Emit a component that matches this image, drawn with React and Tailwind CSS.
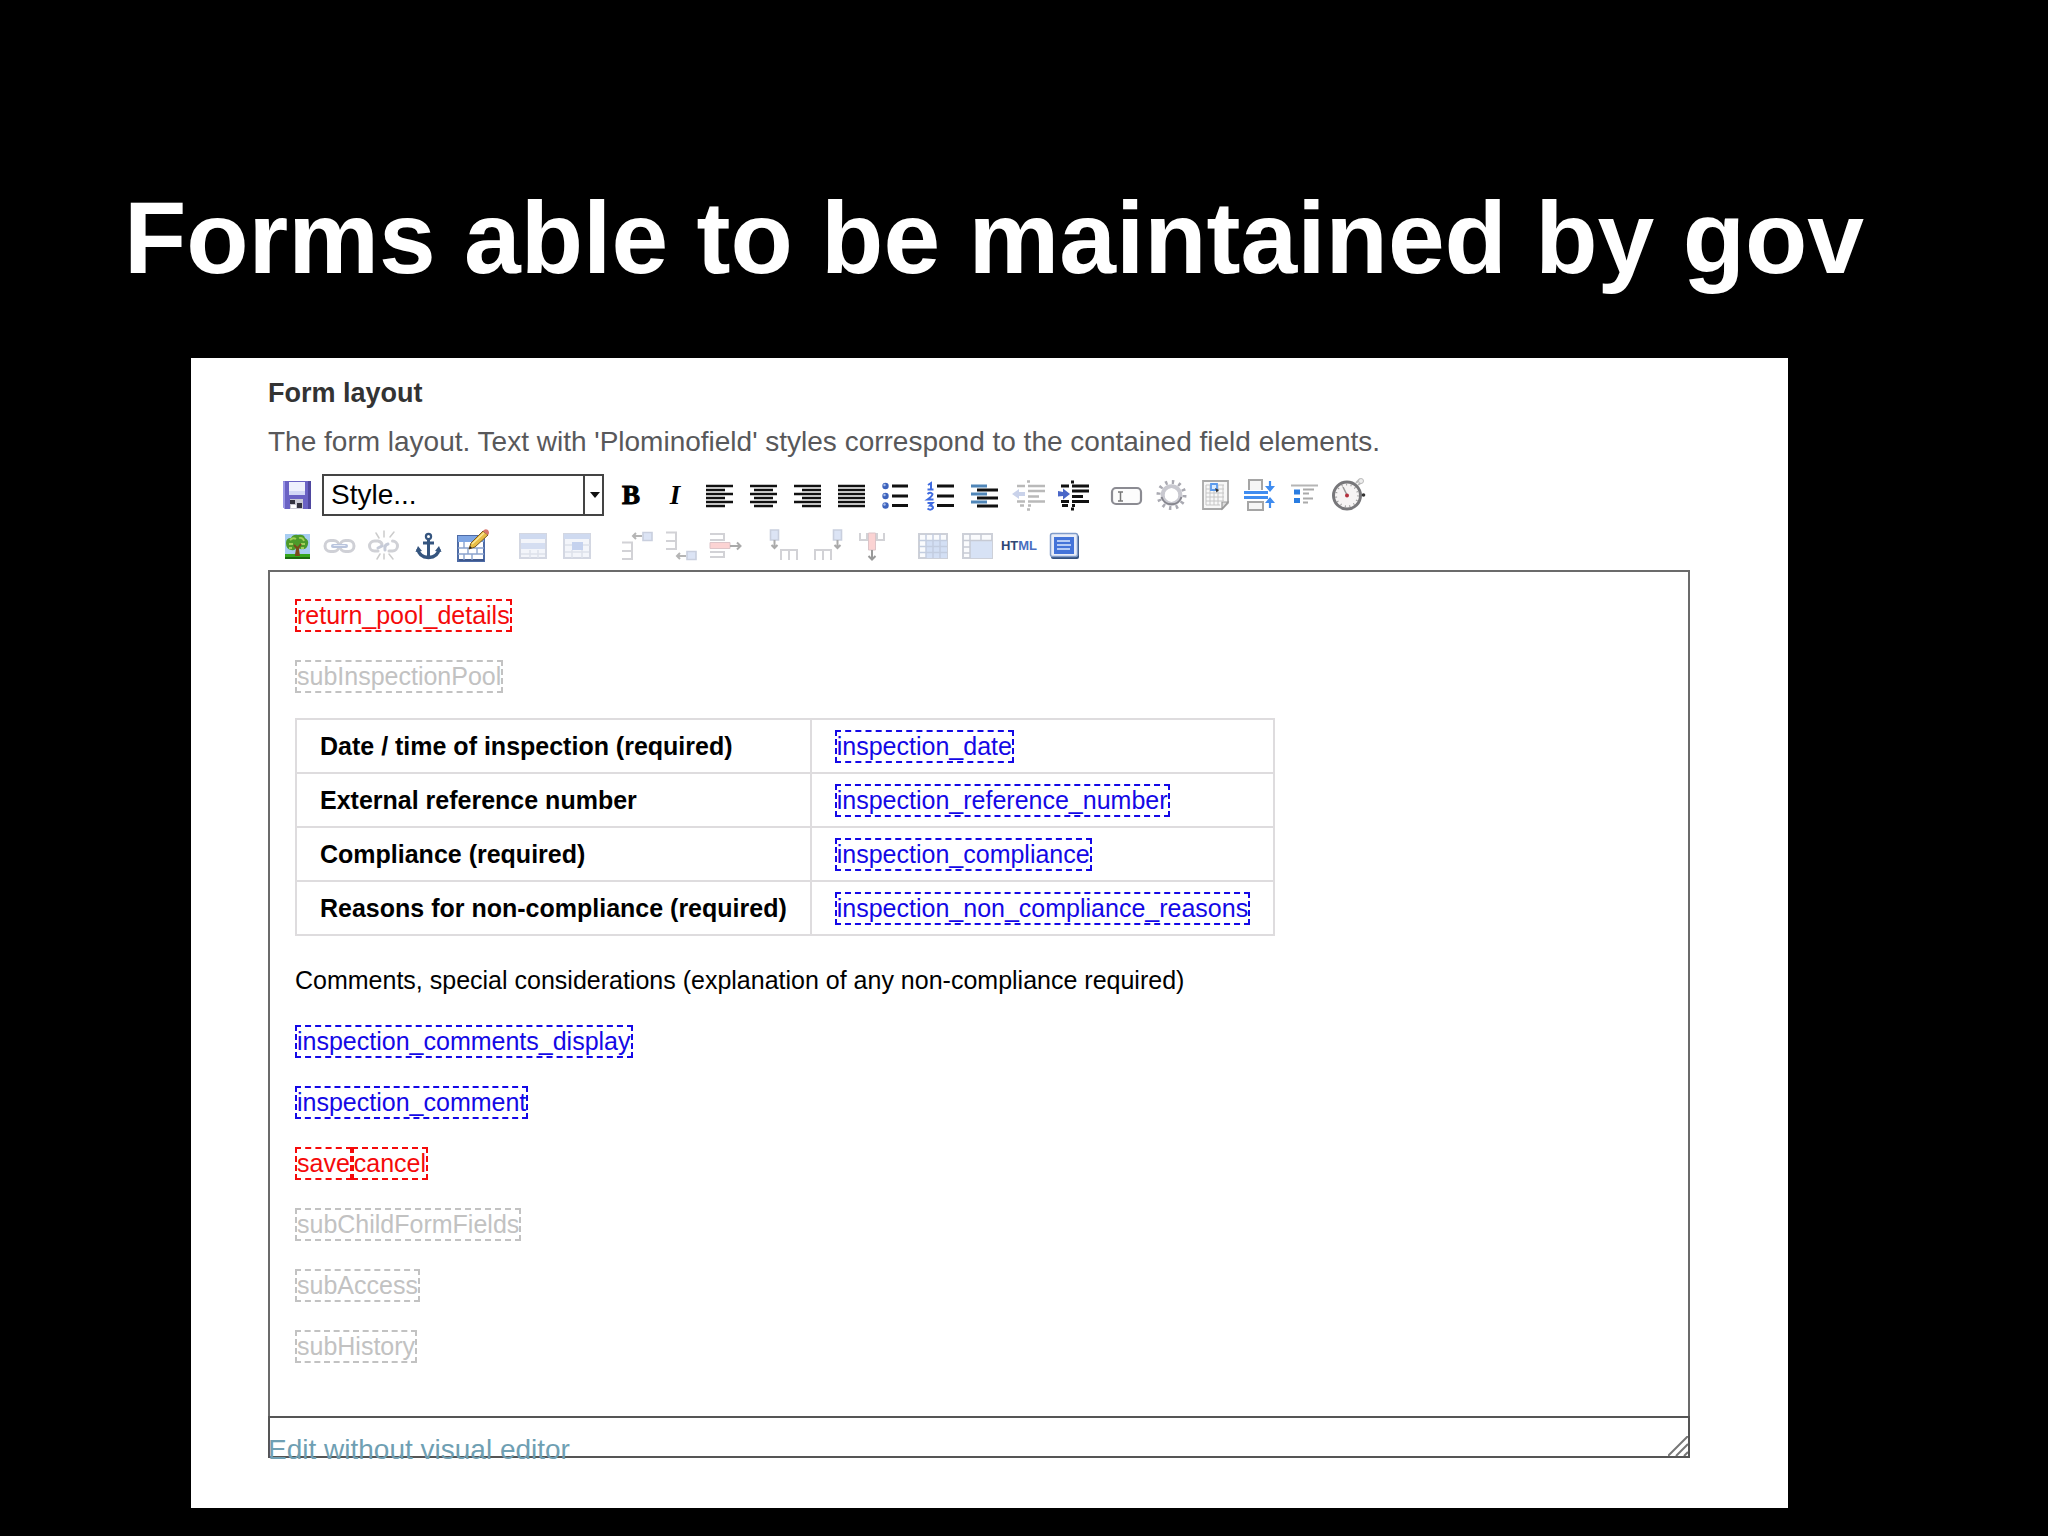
import React from "react";

/**
 * Icon drawings for the editor toolbar.
 * Every drawing shares the same 44x40 box so the buttons stay on one grid.
 */
const ICONS = {
  save: (
    <>
      <path d="M8 7q0-1 1-1h26q1 0 1 1v27H10l-2-2z" fill="#6a62c4" />
      <path d="M8 7v25l2 2V6z" fill="#9a96e6" />
      <path d="M33 6h3v28h-3z" fill="#4f479f" />
      <path d="M14 7h16v13H14z" fill="#eef0fd" />
      <path d="M14 16h16v4H14z" fill="#d3d8f6" />
      <path d="M15 24h13v10H15z" fill="#c9c9d4" />
      <path d="M15 25h5v4h-5zM22 28h5v5h-5z" fill="#33323f" />
      <path d="M16 30h5v3h-5z" fill="#fff" />
    </>
  ),
  alignLeft: (
    <path d="M9 11h27M9 15h19M9 19h27M9 23h19M9 27h27M9 31h19" stroke="#111" strokeWidth="2.6" />
  ),
  alignCenter: (
    <path d="M9 11h27M13 15h19M9 19h27M13 23h19M9 27h27M13 31h19" stroke="#111" strokeWidth="2.6" />
  ),
  alignRight: (
    <path d="M9 11h27M17 15h19M9 19h27M17 23h19M9 27h27M17 31h19" stroke="#111" strokeWidth="2.6" />
  ),
  alignFull: (
    <path d="M9 11h27M9 15h27M9 19h27M9 23h27M9 27h27M9 31h27" stroke="#111" strokeWidth="2.6" />
  ),
  bullets: (
    <>
      <path d="M19 11h16M19 21h16M19 30.500h16" stroke="#111" strokeWidth="2.8" />
      <g fill="#3d63bd">
        <circle cx="12.500" cy="11" r="3.200" />
        <circle cx="12.500" cy="21" r="3.200" />
        <circle cx="12.500" cy="30.500" r="3.200" />
      </g>
      <g fill="#a9bdea">
        <circle cx="11.500" cy="10" r="1.200" />
        <circle cx="11.500" cy="20" r="1.200" />
        <circle cx="11.500" cy="29.500" r="1.200" />
      </g>
    </>
  ),
  numbers: (
    <>
      <path d="M20 11h17M20 21h17M20 30.500h17" stroke="#111" strokeWidth="2.8" />
      <g fill="none" stroke="#3f6be0" strokeWidth="2">
        <path d="M11 10l3-2v6M10.500 14.500h6" />
        <path d="M10.500 19q3-2.500 5 0q0 2-5 5.500h6" />
        <path d="M10.500 28h5l-2.500 2.500q3 0 3 2.500q-2 3-5.500.500" />
      </g>
    </>
  ),
  definition: (
    <>
      <path d="M10 11h16M10 19h16M10 27h16" stroke="#4f86b8" strokeWidth="2.8" />
      <path d="M16 15h21M16 23h21M16 31h21" stroke="#111" strokeWidth="2.8" />
    </>
  ),
  outdent: (
    <>
      <path d="M23 11h17M23 16h17M23 21.500h11M23 26.500h17M12 11h8M12 26.500h8M15 30.500h4M23 30.500h3M22 6.500h3M22 34.500h3" stroke="#b9b9b9" strokeWidth="2.4" />
      <path d="M7 19l7-5v3h6v4h-6v3z" fill="#c9d2ea" />
    </>
  ),
  indent: (
    <>
      <path d="M23 11h17M23 16h17M23 21.500h11M23 26.500h17M12 11h8M12 26.500h8M13 30.500h6M23 30.500h3M22 7h3M22 34h3" stroke="#111" strokeWidth="3" />
      <path d="M21 19l-7-5.500v3.500l-5-1v5.500l5-.500v3.500z" fill="#4a67c8" />
    </>
  ),
  textField: (
    <>
      <rect x="7" y="13" width="29" height="16" rx="4" fill="#fcfcfc" stroke="#8b8b92" strokeWidth="2.2" />
      <path d="M13 17h5M13 26h5M15.500 17v9" stroke="#777" strokeWidth="1.500" />
    </>
  ),
  gear: (
    <>
      <circle cx="22.500" cy="20" r="13" fill="none" stroke="#a9a9b1" strokeWidth="4" strokeDasharray="2.400 4.400" />
      <circle cx="22.500" cy="20" r="8.800" fill="#fff" stroke="#c9c9d0" strokeWidth="4" />
      <path d="M12.500 22a10.500 10.500 0 0 0 20 0" fill="none" stroke="#85858d" strokeWidth="2" />
      <path d="M22.500 13l6 4v6l-6 4-6-4v-6z" fill="#fff" />
    </>
  ),
  page: (
    <>
      <path d="M10 6h25v22l-6 6H10z" fill="#f8f8f8" stroke="#a9a9a9" strokeWidth="1.800" />
      <path d="M35 27h-6v7z" fill="#ddd" stroke="#999" strokeWidth="1.200" />
      <path d="M13 10h18M13 14h18M13 18h18M13 22h18M13 26h18M13 30h14M13 10v20M17 10v20M21 10v20M25 10v20M30 10v16" stroke="#c6c6c6" />
      <path d="M18 9h6v6h-6z" fill="#d9ebff" stroke="#5b9bee" strokeWidth="1.800" />
      <path d="M22 13l4 2-2.500 2.500z" fill="#333" />
    </>
  ),
  pageBreak: (
    <>
      <path d="M12 15V5h13v10M11 35v-8h15v8z" fill="#f6f6f6" stroke="#a5a5a5" strokeWidth="2" />
      <path d="M7 17.500h24M7 22.500h24" stroke="#3f8cf0" strokeWidth="2.800" />
      <path d="M33 6v9M33 33v-9" stroke="#3f8cf0" strokeWidth="2.200" />
      <path d="M28 11h10l-5 6zM28 28h10l-5-6z" fill="#3f8cf0" />
    </>
  ),
  accordion: (
    <>
      <path d="M10 10.500h27" stroke="#b5b5b5" strokeWidth="2" />
      <path d="M13 14.500h6v5h-6zM13 23h6v5h-6z" fill="#2a7de1" />
      <path d="M22 14.500h11M22 18.500h6M22 23.500h10M22 27.500h5" stroke="#aaa" strokeWidth="1.800" />
    </>
  ),
  stopwatch: (
    <>
      <circle cx="22" cy="20.500" r="13.500" fill="#f6f4f4" stroke="#77777a" strokeWidth="3" />
      <circle cx="22" cy="20.500" r="11" fill="none" stroke="#999" strokeWidth="2" strokeDasharray="1 3.600" />
      <path d="M18 12l4.500 9" stroke="#999" strokeWidth="1.500" />
      <circle cx="22" cy="20.500" r="2" fill="#b3303e" />
      <path d="M31 8l4-4M33 10l4-3" stroke="#bbb" strokeWidth="2" />
      <circle cx="36" cy="6" r="2.500" fill="#eee" stroke="#bbb" />
      <circle cx="38.500" cy="20" r="1.800" fill="#333" />
    </>
  ),
  image: (
    <>
      <path d="M10 8h25v25H10z" fill="#a8cdf2" />
      <path d="M10 28h25v5H10z" fill="#35a51c" />
      <path d="M10 31h25v2H10z" fill="#1d6b10" />
      <path d="M20 30l2-8-5-4 2-1 4 3 4-5 2 1-5 7 1 7z" fill="#7b4a1c" />
      <path d="M11 17q0-5 5-5 2-4 7-3 6-1 7 3 4 2 3 6-1 6-6 5-3 1-5-3-1 5-6 4-5-1-5-7z" fill="#4c9a2a" />
      <path d="M15 14q3-3 6-1M24 12q4-1 5 3M14 18h4M26 18h4M14 22h3M26 22h3" fill="none" stroke="#a2cf58" strokeWidth="1.800" />
      <path d="M21 30l1-8-3-3M23 22l3-4" fill="none" stroke="#7b4a1c" strokeWidth="2" />
    </>
  ),
  link: (
    <g fill="none" strokeLinecap="round">
      <rect x="6" y="14.500" width="14" height="11" rx="5.500" stroke="#cfd0d6" strokeWidth="3" />
      <rect x="21" y="14.500" width="14" height="11" rx="5.500" stroke="#cfd0d6" strokeWidth="3" />
      <path d="M14 20h13" stroke="#b9c4dd" strokeWidth="4" />
      <path d="M15 19.500h11" stroke="#e9edf6" strokeWidth="1.200" />
    </g>
  ),
  unlink: (
    <g fill="none" strokeLinecap="round">
      <path d="M15 25h-3.500a5 5 0 0 1 0-10H15q4 1 4 4M26 25h3.500a5 5 0 0 0 0-10" stroke="#d0d1d6" strokeWidth="3" />
      <path d="M15 22l4-2M25 18q-4 1-3 6" stroke="#c6cbd8" strokeWidth="3" />
      <path d="M21 5v6M13 7l3 5M31 6l-4 5M21 28v5M14 33l3-5M30 33l-4-5" stroke="#ccc" strokeWidth="1.500" />
    </g>
  ),
  anchor: (
    <g fill="none" stroke="#35557f" strokeWidth="3">
      <circle cx="21.500" cy="10.500" r="2.600" strokeWidth="2.200" />
      <path d="M21.500 13v18M16 17h11" />
      <path d="M11 23q1 8 10.500 8.500Q31 31 32 23" strokeWidth="3.400" />
      <path d="M8.500 26l2.500-6 4 5zM34.500 26L32 20l-4 5z" fill="#35557f" stroke="none" />
    </g>
  ),
  table: (
    <>
      <path d="M7 10h26v25H7z" fill="#fff" stroke="#4d6ba6" strokeWidth="2" />
      <path d="M7 10h26v6H7z" fill="#7fa6e4" />
      <path d="M8 33h25v2H8z" fill="#3c568c" />
      <path d="M7 22h26M7 28h26M13 16v6M21 16v6M17 22v6M26 22v6M13 28v6M21 28v6" stroke="#8ba3cd" strokeWidth="1.400" />
      <path d="M18 23l2-6L32 5l5 4-13 12z" fill="#e8bd45" stroke="#7a5a22" />
      <path d="M32 5q2-3 5-1 2 3 0 5z" fill="#d9766c" />
      <path d="M21 18L33 7" stroke="#fae79a" strokeWidth="1.600" />
      <path d="M18 23l1-3 2 2z" fill="#222" />
    </>
  ),
  rowProps: (
    <>
      <path d="M10 8h26v24H10z" fill="#f3f5fa" stroke="#d3d7e2" strokeWidth="2" />
      <path d="M10 8h26v5H10z" fill="#cfdaf0" />
      <path d="M11 17h24v6H11z" fill="#d5def1" />
      <path d="M11 28h24M20 24v8M28 24v8" stroke="#dde1ea" strokeWidth="1.500" />
    </>
  ),
  cellProps: (
    <>
      <path d="M10 8h26v24H10z" fill="#f3f5fa" stroke="#d3d7e2" strokeWidth="2" />
      <path d="M10 8h26v5H10z" fill="#cfdaf0" />
      <path d="M18 16h11v8H18z" fill="#c5d2ee" />
      <path d="M11 19h7M11 26h24M29 19h7M18 24v8M28 24v8" stroke="#dde1ea" strokeWidth="1.500" />
    </>
  ),
  rowBefore: (
    <>
      <path d="M9 16.500h10V33H9M9 25h10" fill="none" stroke="#d2d2d6" strokeWidth="2" />
      <path d="M20 10h9M23 7l-3 3 3 3" fill="none" stroke="#b5b5b5" strokeWidth="2" />
      <path d="M30 6.500h9v8h-9z" fill="#dce4f5" stroke="#c9cfde" strokeWidth="1.600" />
    </>
  ),
  rowAfter: (
    <>
      <path d="M9 6.500h10V23H9M9 15h10" fill="none" stroke="#d2d2d6" strokeWidth="2" />
      <path d="M20 30h9M23 27l-3 3 3 3" fill="none" stroke="#b5b5b5" strokeWidth="2" />
      <path d="M30 25.500h9v8h-9z" fill="#dce4f5" stroke="#c9cfde" strokeWidth="1.600" />
    </>
  ),
  rowDelete: (
    <>
      <path d="M9 8h14v6H9M9 26h14v5H9" fill="none" stroke="#d2d2d6" strokeWidth="2" />
      <path d="M9 16.500h20v6H9z" fill="#fbd3d3" stroke="#dcc4c8" />
      <path d="M29 20h10M36 16.500l3.500 3.500-3.500 3.500" fill="none" stroke="#aaa" strokeWidth="2" />
    </>
  ),
  colBefore: (
    <>
      <path d="M21 34V24h16v10M29 24v10" fill="none" stroke="#d2d2d6" strokeWidth="2" />
      <path d="M10.500 4h8v10h-8z" fill="#dce4f5" stroke="#c9cfde" strokeWidth="1.600" />
      <path d="M14.500 14v8M11.500 19l3 3 3-3" fill="none" stroke="#aaa" strokeWidth="2" />
    </>
  ),
  colAfter: (
    <>
      <path d="M11 34V24h16v10M19 24v10" fill="none" stroke="#d2d2d6" strokeWidth="2" />
      <path d="M29.500 4h8v10h-8z" fill="#dce4f5" stroke="#c9cfde" strokeWidth="1.600" />
      <path d="M33.500 14v8M30.500 19l3 3 3-3" fill="none" stroke="#aaa" strokeWidth="2" />
    </>
  ),
  colDelete: (
    <>
      <path d="M12 7v7h7V7M29 7v7h7V7" fill="none" stroke="#d2d2d6" strokeWidth="2" />
      <path d="M20.500 7h7v17h-7z" fill="#fbd3d3" stroke="#dcc4c8" />
      <path d="M24 24v9M20.500 30l3.500 3.500 3.500-3.500" fill="none" stroke="#999" strokeWidth="2" />
    </>
  ),
  splitCells: (
    <>
      <path d="M10 8h28v24H10z" fill="#fafbfd" stroke="#cdd0d8" strokeWidth="2" />
      <path d="M17 15h21v17H17z" fill="#d3dff4" />
      <path d="M10 14.500h28M10 20.500h28M10 26.500h28M17 8v24M24 8v24M31 8v24" stroke="#c3cde0" strokeWidth="1.500" />
    </>
  ),
  mergeCells: (
    <>
      <path d="M10 8h29v24H10z" fill="#fafbfd" stroke="#cdd0d8" strokeWidth="2" />
      <path d="M17 15h22v17H17z" fill="#d7e2f5" />
      <path d="M10 14.500h29M10 21h7M10 27h7M17 8v24M28 8v6" stroke="#c6cad4" strokeWidth="1.500" />
    </>
  ),
  fullScreen: (
    <>
      <rect x="10" y="9" width="28" height="24" rx="2" fill="#33517f" />
      <rect x="9.500" y="7.500" width="27" height="23" rx="2" fill="#e8edf8" stroke="#7f9bc9" strokeWidth="1.500" />
      <path d="M13 11h20v17H13z" fill="#4373d9" />
      <path d="M16 15h13M16 19h14M16 23h13" stroke="#b4cbf6" strokeWidth="2" />
    </>
  ),
};

// Rows of the toolbar, split into groups of buttons
const FORMAT_GROUPS = [
  [
    { id: "bold", label: "Bold" },
    { id: "italic", label: "Italic" },
    { id: "alignLeft", label: "Align left" },
    { id: "alignCenter", label: "Align center" },
    { id: "alignRight", label: "Align right" },
    { id: "alignFull", label: "Justify" },
    { id: "bullets", label: "Bulleted list" },
    { id: "numbers", label: "Numbered list" },
    { id: "definition", label: "Definition list" },
    { id: "outdent", label: "Outdent" },
    { id: "indent", label: "Indent" },
  ],
  [
    { id: "textField", label: "Plomino field" },
    { id: "gear", label: "Plomino action" },
    { id: "page", label: "Plomino subform" },
    { id: "pageBreak", label: "Plomino hide when" },
    { id: "accordion", label: "Plomino accordion" },
    { id: "stopwatch", label: "Plomino cache" },
  ],
];

const INSERT_GROUPS = [
  [
    { id: "image", label: "Insert image" },
    { id: "link", label: "Insert link" },
    { id: "unlink", label: "Remove link" },
    { id: "anchor", label: "Insert anchor" },
    { id: "table", label: "Insert table" },
  ],
  [
    { id: "rowProps", label: "Row properties" },
    { id: "cellProps", label: "Cell properties" },
  ],
  [
    { id: "rowBefore", label: "Insert row before" },
    { id: "rowAfter", label: "Insert row after" },
    { id: "rowDelete", label: "Delete row" },
  ],
  [
    { id: "colBefore", label: "Insert column before" },
    { id: "colAfter", label: "Insert column after" },
    { id: "colDelete", label: "Delete column" },
  ],
  [
    { id: "splitCells", label: "Split cells" },
    { id: "mergeCells", label: "Merge cells" },
    { id: "html", label: "Edit HTML" },
    { id: "fullScreen", label: "Full screen" },
  ],
];

const TABLE_ROWS = [
  { label: "Date / time of inspection (required)", field: "inspection_date" },
  { label: "External reference number", field: "inspection_reference_number" },
  { label: "Compliance (required)", field: "inspection_compliance" },
  { label: "Reasons for non-compliance (required)", field: "inspection_non_compliance_reasons" },
];

// Colours of the Plomino styles
const FIELD_STYLES = {
  action: "text-[#f50a0a] border-[#f50a0a]",
  field: "text-[#1408e6] border-[#1408e6]",
  subform: "text-[#c2c2c2] border-[#c2c2c2]",
};

const PlominoField = ({ kind, children }) => (
  <span className={`inline-block border-2 border-dashed leading-[29px] ${FIELD_STYLES[kind]}`}>
    {children}
  </span>
);

const ToolGlyph = ({ id }) => {
  if (id === "bold") {
    return (
      <span className="font-['Liberation_Serif',serif] text-[27px] font-bold text-black [-webkit-text-stroke:1px_black]">
        B
      </span>
    );
  }
  if (id === "italic") {
    return <span className="font-['Liberation_Serif',serif] text-[27px] font-bold italic text-black">I</span>;
  }
  if (id === "html") {
    return (
      <span className="text-[13px] font-bold text-[#4a6fc0]">
        <span className="text-[#2f4674]">HT</span>ML
      </span>
    );
  }
  return (
    <svg viewBox="0 0 44 40" className="h-10 w-11" aria-hidden="true">
      {ICONS[id]}
    </svg>
  );
};

const ToolButton = ({ id, label }) => (
  <button type="button" aria-label={label} className="flex h-10 w-11 items-center justify-center">
    <ToolGlyph id={id} />
  </button>
);

const ToolGroup = ({ tools }) => (
  <div className="flex last:pl-[2px]">
    {tools.map((tool) => (
      <ToolButton key={tool.id} {...tool} />
    ))}
  </div>
);

const Toolbar = () => (
  <div className="flex flex-col gap-[10px] pl-[7px]">
    <div className="flex items-center">
      <ToolButton id="save" label="Save" />
      {/* Style picker */}
      <div className="relative ml-[3px] mr-[5px] h-[42px] w-[282px]">
        <select
          aria-label="Style"
          className="h-full w-full appearance-none border-2 border-[#444] bg-white pl-[7px] text-[28px] leading-8 text-black"
        >
          <option>Style...</option>
        </select>
        <span className="pointer-events-none absolute inset-y-0 right-0 flex w-[21px] items-center justify-center border-l-2 border-[#444]">
          <svg viewBox="0 0 10 6" className="h-[6px] w-[10px]" aria-hidden="true">
            <path d="M0 0h10L5 6z" fill="#111" />
          </svg>
        </span>
      </div>
      <div className="flex gap-[10px]">
        {FORMAT_GROUPS.map((tools) => (
          <ToolGroup key={tools[0].id} tools={tools} />
        ))}
      </div>
    </div>
    <div className="flex gap-[15px]">
      {INSERT_GROUPS.map((tools) => (
        <ToolGroup key={tools[0].id} tools={tools} />
      ))}
    </div>
  </div>
);

const LayoutTable = () => (
  <table className="mb-7 mt-[25px] border-collapse">
    <tbody>
      {TABLE_ROWS.map(({ label, field }) => (
        <tr key={field} className="h-[54px]">
          <th scope="row" className="border-2 border-[#dedcde] px-[23px] text-left align-middle">
            {label}
          </th>
          <td className="border-2 border-[#dedcde] px-[23px] align-middle">
            <PlominoField kind="field">{field}</PlominoField>
          </td>
        </tr>
      ))}
    </tbody>
  </table>
);

const EditorContent = () => (
  <div className="h-[848px] border-2 border-[#6b6b6b] pl-[25px] pt-[27px] text-[25px] leading-[33px] text-black">
    <div className="flex flex-col items-start gap-7">
      <p className="flex"><PlominoField kind="action">return_pool_details</PlominoField></p>
      <p className="flex"><PlominoField kind="subform">subInspectionPool</PlominoField></p>
    </div>
    <LayoutTable />
    <div className="flex flex-col items-start gap-7">
      <p>Comments, special considerations (explanation of any non-compliance required)</p>
      <p className="flex"><PlominoField kind="field">inspection_comments_display</PlominoField></p>
      <p className="flex"><PlominoField kind="field">inspection_comment</PlominoField></p>
      <p className="flex">
        <PlominoField kind="action">save</PlominoField>
        <PlominoField kind="action">cancel</PlominoField>
      </p>
      <p className="flex"><PlominoField kind="subform">subChildFormFields</PlominoField></p>
      <p className="flex"><PlominoField kind="subform">subAccess</PlominoField></p>
      <p className="flex"><PlominoField kind="subform">subHistory</PlominoField></p>
    </div>
  </div>
);

const App = () => (
  <main className="min-h-screen bg-black pb-7 font-['Liberation_Sans',Arial,sans-serif]">
    <h1 className="pl-[124px] pt-[179px] text-[102px] font-bold leading-[118px] text-white">
      Forms able to be maintained by gov
    </h1>

    <section className="ml-[191px] mr-[260px] mt-[61px] bg-white pb-[42px] pl-[77px] pr-[98px] pt-[17px]">
      <h2 className="text-[27px] font-bold leading-9 text-[#333]">Form layout</h2>
      <p className="mt-[15px] text-[28px] leading-8 text-[#58585a]">
        The form layout. Text with 'Plominofield' styles correspond to the contained field elements.
      </p>
      <div className="mt-4">
        <Toolbar />
      </div>

      <div className="mt-1">
        <EditorContent />
        {/* Plain source box below the visual editor */}
        <div className="relative -mt-[2px]">
          <textarea
            aria-label="Form layout source"
            className="block h-[42px] w-full resize-none border-2 border-[#555] bg-transparent"
          />
          <svg viewBox="0 0 20 20" className="absolute bottom-[2px] right-[2px] h-5 w-5" aria-hidden="true">
            <path d="M0 20L20 0M8 20L20 8M16 20l4-4" stroke="#777" strokeWidth="2" />
          </svg>
        </div>
        <a href="#" className="relative -mt-6 block w-fit text-[28px] leading-8 text-[#6f9fb3]">
          Edit without visual editor
        </a>
      </div>
    </section>
  </main>
);

export default App;
